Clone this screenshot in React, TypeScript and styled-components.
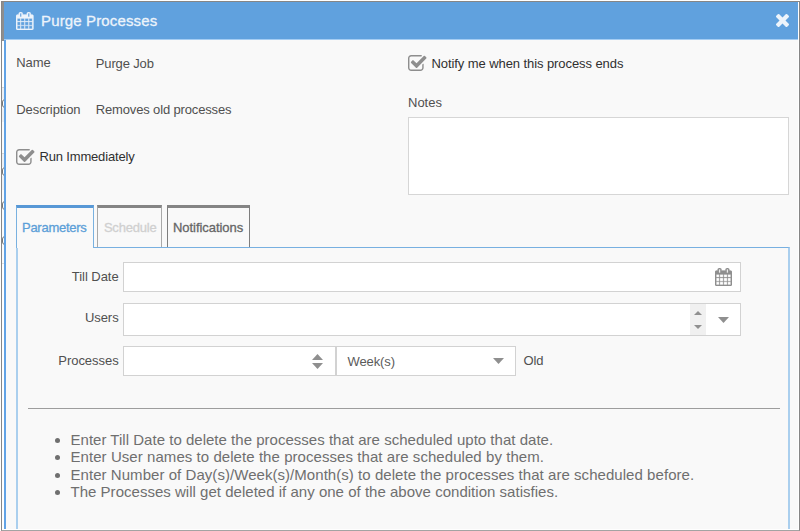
import React from "react";
import styled, { createGlobalStyle } from "styled-components";

const GlobalStyle = createGlobalStyle`
  * { box-sizing: border-box; }
  body {
    margin: 0;
    background: #fff;
    font-family: "Liberation Sans", Arial, sans-serif;
    font-size: 13px;
    line-height: 16px;
    color: #505050;
  }
`;

const Page = styled.div`
  width: 800px;
  height: 531px;
  padding: 1px 0 0 1px;
  overflow: hidden;
`;

const Frame = styled.div`
  display: flex;
  height: 530px;
  border: 1px solid #868686;
  border-bottom-color: #a3a3a3;
`;

const Backdrop = styled.div`
  flex: none;
  width: 2px;
  display: flex;
  flex-direction: column;
  overflow: hidden;
  background: #fff;
`;

const BackdropRow = styled.div<{ $h: number; $bg?: string }>`
  flex: none;
  height: ${(p) => p.$h}px;
  background: ${(p) => p.$bg ?? "#fbfbfb"};
`;

const BackdropGlyph = styled.div`
  flex: none;
  width: 8px;
  height: 9px;
  border: 1px solid #777;
  border-radius: 3px;
`;

const Dialog = styled.section`
  flex: 1;
  display: flex;
  flex-direction: column;
  margin: 0 1px 1px 0;
  background: #f9f9f9;
  border-left: 2px solid #61a3e6;
`;

const Header = styled.header`
  flex: none;
  display: flex;
  align-items: center;
  height: 38px;
  margin-left: -2px;
  padding: 0 9px 0 12px;
  background: #60a1de;
  border-bottom: 1px solid #a5cdf3;
  color: #edf4fb;
`;

const Title = styled.h1`
  flex: 1;
  margin: 1px 0 0 7.5px;
  font-size: 15px;
  font-weight: 400;
  line-height: 18px;
  letter-spacing: 0.14px;
  -webkit-text-stroke: 0.3px;
`;

const Icon = styled.svg<{ $w: number; $h: number }>`
  flex: none;
  display: block;
  width: ${(p) => p.$w}px;
  height: ${(p) => p.$h}px;
  fill: currentColor;
`;

const Body = styled.div`
  flex: 1;
  display: flex;
  flex-direction: column;
  padding: 0 8px 0 10px;
`;

const Summary = styled.div`
  display: grid;
  grid-template-columns: 392px 381px;
  height: 165px;
  padding-top: 15px;
`;

const Column = styled.div`
  display: flex;
  flex-direction: column;
`;

const InfoRow = styled.div`
  display: grid;
  grid-template-columns: 79.5px 1fr;
  height: 47px;
`;

const InfoText = styled.span<{ $spacing?: number; $drop?: number }>`
  padding: ${(p) => p.$drop ?? 0}px 0 0 0.3px;
  letter-spacing: ${(p) => p.$spacing ?? -0.08}px;
`;

const Check = styled.label<{ $spacing: number }>`
  display: flex;
  align-items: center;
  gap: 5px;
  height: 16px;
  color: #303030;
  letter-spacing: ${(p) => p.$spacing}px;
`;

const CheckText = styled.span<{ $drop: number }>`
  padding-top: ${(p) => p.$drop}px;
`;

const CheckMark = styled.span`
  color: #8e8e8e;
`;

const Notes = styled.label`
  display: flex;
  flex-direction: column;
  gap: 6px;
  margin-top: 24px;
`;

const NotesArea = styled.textarea`
  width: 381px;
  height: 78px;
  border: 1px solid #d6d6d6;
  background: #fff;
  resize: none;
  outline: none;
`;

const TabBar = styled.nav`
  display: flex;
  height: 42px;
  position: relative;
`;

const Tab = styled.button<{
  $w: number;
  $gap: number;
  $spacing: number;
  $kind: "active" | "disabled" | "normal";
}>`
  width: ${(p) => p.$w}px;
  height: ${(p) => (p.$kind === "active" ? 43 : 42)}px;
  margin: 0 ${(p) => p.$gap}px 0 0;
  padding: 0 0 ${(p) => (p.$kind === "active" ? 1 : 0)}px 5px;
  text-align: left;
  white-space: nowrap;
  font: 13px/16px "Liberation Sans", Arial, sans-serif;
  letter-spacing: ${(p) => p.$spacing}px;
  -webkit-text-stroke: 0.3px;
  background: #f9f9f9;
  color: ${(p) => ({ active: "#5c9fd8", disabled: "#d0d0d0", normal: "#666" })[p.$kind]};
  border: 1px solid ${(p) => ({ active: "#79b1e0", disabled: "#a9a9a9", normal: "#7e7e7e" })[p.$kind]};
  border-top: 3px solid ${(p) => (p.$kind === "active" ? "#5898d6" : "#858585")};
  border-bottom: 0;
`;

const Panel = styled.main`
  flex: 1;
  padding: 14px 8px 0 10px;
  border: solid #aacfee;
  border-width: 1px 2px 0;
  border-top-color: #78b0e1;
`;

const Field = styled.div<{ $h: number; $gap: number }>`
  display: flex;
  height: ${(p) => p.$h}px;
  margin-bottom: ${(p) => p.$gap}px;
`;

const FieldLabel = styled.label`
  width: 90.6px;
  margin-right: 4.4px;
  padding-top: 7px;
  text-align: right;
  letter-spacing: -0.05px;
`;

const Control = styled.div<{ $w: number; $pad?: number }>`
  display: flex;
  align-items: center;
  justify-content: flex-end;
  width: ${(p) => p.$w}px;
  padding-right: ${(p) => p.$pad ?? 0}px;
  background: #fff;
  border: 1px solid #d2d2d2;
  color: #8f8f8f;
`;

const Scroller = styled.div`
  display: flex;
  flex-direction: column;
  align-items: center;
  justify-content: space-between;
  width: 16px;
  height: 100%;
  padding: 7px 0 6px;
  margin-right: 12px;
  background: #f0f0f0;
`;

const SpinButtons = styled.div`
  display: flex;
  flex-direction: column;
  gap: 3px;
`;

const SelectValue = styled.span`
  flex: 1;
  padding: 1px 0 0 10.5px;
  letter-spacing: -0.1px;
  color: #5b5b5b;
`;

const Suffix = styled.span`
  padding: 7px 0 0 7.5px;
  letter-spacing: -0.1px;
`;

const Divider = styled.hr`
  height: 1px;
  margin: 0;
  border: 0;
  background: #9d9d9d;
`;

const Hints = styled.ul`
  margin: 22px 0 0;
  padding: 0 0 0 42.5px;
  font-size: 15px;
  line-height: 17.4px;
  color: #6f6f6f;
`;

const Hint = styled.li<{ $spacing: number }>`
  letter-spacing: ${(p) => p.$spacing}px;
  white-space: nowrap;
`;

const CalendarIcon = ({ w, h }: { w: number; h: number }) => (
  <Icon $w={w} $h={h} viewBox="64 0 1664 1792" preserveAspectRatio="none" stroke="currentColor" strokeWidth={24}>
    <path d="M192 1664h288v-288h-288v288zm352 0h320v-288h-320v288zm-352-352h288v-320h-288v320zm352 0h320v-320h-320v320zm-352-384h288v-288h-288v288zm736 736h320v-288h-320v288zm-384-736h320v-288h-320v288zm768 736h288v-288h-288v288zm-384-352h320v-320h-320v320zm-352-864v-288q0-13-9.5-22.5t-22.5-9.5h-64q-13 0-22.5 9.5t-9.5 22.5v288q0 13 9.5 22.5t22.5 9.5h64q13 0 22.5-9.5t9.5-22.5zm736 864h288v-320h-288v320zm-384-384h320v-288h-320v288zm384 0h288v-288h-288v288zm32-480v-288q0-13-9.5-22.5t-22.5-9.5h-64q-13 0-22.5 9.5t-9.5 22.5v288q0 13 9.5 22.5t22.5 9.5h64q13 0 22.5-9.5t9.5-22.5zm384-64v1280q0 52-38 90t-90 38h-1408q-52 0-90-38t-38-90v-1280q0-52 38-90t90-38h128v-96q0-66 47-113t113-47h64q66 0 113 47t47 113v96h384v-96q0-66 47-113t113-47h64q66 0 113 47t47 113v96h128q52 0 90 38t38 90z" />
  </Icon>
);

const CloseIcon = () => (
  <Icon $w={13} $h={13} viewBox="302 366 1188 1188">
    <path d="M1490 1322q0 40-28 68l-136 136q-28 28-68 28t-68-28l-294-294-294 294q-28 28-68 28t-68-28l-136-136q-28-28-28-68t28-68l294-294-294-294q-28-28-28-68t28-68l136-136q28-28 68-28t68 28l294 294 294-294q28-28 68-28t68 28l136 136q28 28 28 68t-28 68l-294 294 294 294q28 28 28 68z" />
  </Icon>
);

const CheckedIcon = () => (
  <Icon $w={18.5} $h={16} viewBox="64 128 1664 1408" preserveAspectRatio="none">
    <path d="M1472 930v318q0 119-84.500 203.500t-203.500 84.500h-832q-119 0-203.500-84.500t-84.500-203.500v-832q0-119 84.500-203.500t203.500-84.500h832q63 0 117 25 15 7 18 23 3 17-9 29l-49 49q-10 10-23 10-3 0-9-2-23-6-45-6h-832q-66 0-113 47t-47 113v832q0 66 47 113t113 47h832q66 0 113-47t47-113v-254q0-13 9-22l64-64q10-10 23-10 6 0 12 3 20 8 20 29zm231-489l-814 814q-24 24-57 24t-57-24l-430-430q-24-24-24-57t24-57l110-110q24-24 57-24t57 24l263 263 647-647q24-24 57-24t57 24l110 110q24 24 24 57t-24 57z" />
  </Icon>
);

const Arrow = ({ w, h, up }: { w: number; h: number; up?: boolean }) => (
  <Icon $w={w} $h={h} viewBox="0 0 10 5" preserveAspectRatio="none">
    <path d={up ? "M0 5L5 0L10 5Z" : "M0 0H10L5 5Z"} />
  </Icon>
);

const CheckLine = ({
  spacing,
  drop = 0,
  children,
}: {
  spacing: number;
  drop?: number;
  children: React.ReactNode;
}) => (
  <Check $spacing={spacing}>
    <CheckMark>
      <CheckedIcon />
    </CheckMark>
    <CheckText $drop={drop}>{children}</CheckText>
  </Check>
);

const hints = [
  { text: "Enter Till Date to delete the processes that are scheduled upto that date.", spacing: 0.02 },
  { text: "Enter User names to delete the processes that are scheduled by them.", spacing: 0.06 },
  { text: "Enter Number of Day(s)/Week(s)/Month(s) to delete the processes that are scheduled before.", spacing: 0.05 },
  { text: "The Processes will get deleted if any one of the above condition satisfies.", spacing: 0.02 },
];

export default function App() {
  return (
    <Page>
      <GlobalStyle />
      <Frame>
        <Backdrop>
          <BackdropRow $h={39} $bg="#8e8e8e" />
          <BackdropRow $h={46} $bg="#fff" />
          <BackdropRow $h={1} $bg="#d5d5d5" />
          <BackdropRow $h={11} $bg="#eef0f3" />
          <BackdropGlyph />
          <BackdropRow $h={14} $bg="#eef0f3" />
          <BackdropRow $h={31} />
          <BackdropRow $h={1} $bg="#d5d5d5" />
          <BackdropRow $h={13} $bg="#eef0f3" />
          <BackdropGlyph />
          <BackdropRow $h={14} $bg="#eef0f3" />
          <BackdropRow $h={11} />
          <BackdropGlyph />
          <BackdropRow $h={26} />
          <BackdropGlyph />
          <BackdropRow $h={18} />
          <BackdropRow $h={1} $bg="#dedede" />
        </Backdrop>
        <Dialog>
          <Header>
            <CalendarIcon w={17.5} h={18} />
            <Title>Purge Processes</Title>
            <CloseIcon />
          </Header>
          <Body>
            <Summary>
              <Column>
                <InfoRow>
                  <InfoText>Name</InfoText>
                  <InfoText $spacing={-0.15} $drop={1}>Purge Job</InfoText>
                </InfoRow>
                <InfoRow>
                  <InfoText>Description</InfoText>
                  <InfoText $spacing={-0.15}>Removes old processes</InfoText>
                </InfoRow>
                <CheckLine spacing={-0.17}>Run Immediately</CheckLine>
              </Column>
              <Column>
                <CheckLine spacing={-0.08} drop={1}>Notify me when this process ends</CheckLine>
                <Notes>
                  Notes
                  <NotesArea />
                </Notes>
              </Column>
            </Summary>
            <TabBar>
              <Tab $kind="active" $w={78} $gap={3} $spacing={-0.27}>Parameters</Tab>
              <Tab $kind="disabled" $w={65} $gap={5} $spacing={-0.2}>&#8202;Schedule</Tab>
              <Tab $kind="normal" $w={83} $gap={0} $spacing={-0.05}>Notifications</Tab>
            </TabBar>
            <Panel>
              <Field $h={30} $gap={11}>
                <FieldLabel>Till Date</FieldLabel>
                <Control $w={618} $pad={8}>
                  <CalendarIcon w={17} h={18} />
                </Control>
              </Field>
              <Field $h={33} $gap={10}>
                <FieldLabel>Users</FieldLabel>
                <Control $w={618} $pad={11}>
                  <Scroller>
                    <Arrow w={8} h={4} up />
                    <Arrow w={8} h={4} />
                  </Scroller>
                  <Arrow w={11} h={6} />
                </Control>
              </Field>
              <Field $h={30} $gap={32}>
                <FieldLabel>Processes</FieldLabel>
                <Control $w={213} $pad={12}>
                  <SpinButtons>
                    <Arrow w={11} h={6} up />
                    <Arrow w={11} h={6} />
                  </SpinButtons>
                </Control>
                <Control $w={180} $pad={11}>
                  <SelectValue>Week(s)</SelectValue>
                  <Arrow w={11} h={6} />
                </Control>
                <Suffix>Old</Suffix>
              </Field>
              <Divider />
              <Hints>
                {hints.map((h) => (
                  <Hint key={h.text} $spacing={h.spacing}>{h.text}</Hint>
                ))}
              </Hints>
            </Panel>
          </Body>
        </Dialog>
      </Frame>
    </Page>
  );
}
